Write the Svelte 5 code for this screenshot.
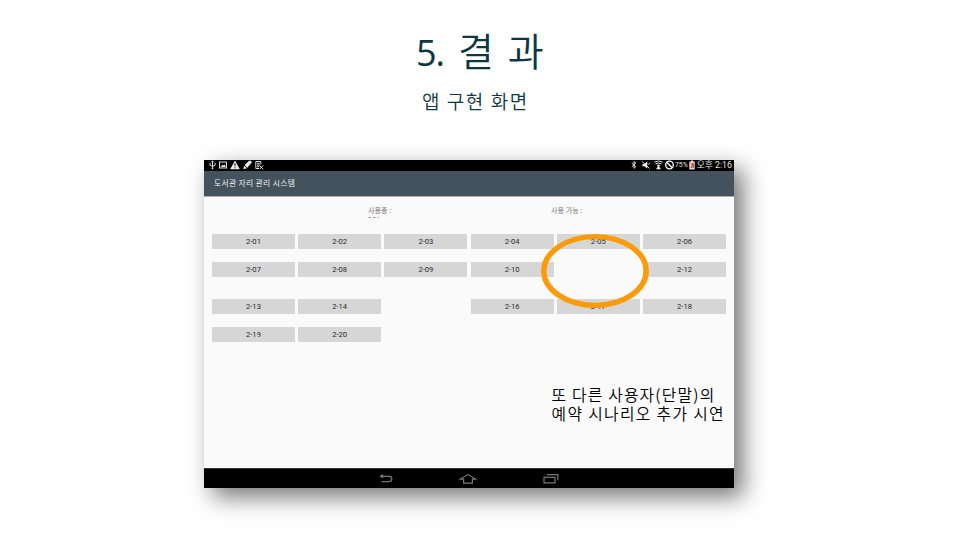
<script>
  const rows = [
    ['2-01', '2-02', '2-03', '2-04', '2-05', '2-06'],
    ['2-07', '2-08', '2-09', '2-10', '', '2-12'],
    ['2-13', '2-14', '', '2-16', '2-17', '2-18'],
    ['2-19', '2-20', '', '', '', '']
  ];
</script>

<main class="slide">
  <h1><span class="num">5.</span><span>결 과</span></h1>
  <h2>앱 구현 화면</h2>

  <section class="tablet">
    <div class="status">
      <div class="icons left">
        <svg width="7" height="10" viewBox="0 0 7 10"><path d="M3.5 1v7.5M1 3v2.2l2.5 1.4L6 5.2V3M2.5 2.2l1-1.4 1 1.4" /><circle cx="3.5" cy="8.5" r=".8" class="solid" /></svg>
        <svg width="8" height="10" viewBox="0 0 8 10"><rect x=".5" y="2" width="7" height="6" /><path class="solid" d="M1.5 7l2-2.2 1 1L5.5 4.5 6.8 7z" /></svg>
        <svg width="10" height="10" viewBox="0 0 10 10"><path class="solid" d="M5 .5L9.8 9.3H.2z" /><path class="dark" d="M5 3.3v3M5 7.2v1.1" /></svg>
        <svg width="9" height="10" viewBox="0 0 9 10"><path class="solid" d="M.3 9.3l.8-3.6 2.8 2.6zM1.6 5L5.8.9q1.5-.8 2.5.3.8 1.1-.1 2.1L4.3 7.8z" /></svg>
        <svg class="doc" width="9" height="10" viewBox="0 0 9 10"><path d="M4 8.5H.8v-7h5v3M2 3.3h2.7M2 5h2.5M2 6.7h2M4.2 5.2l4 4M8.2 5.5L4.5 9.2" /></svg>
      </div>
      <div class="icons right">
        <svg class="bt" width="6" height="10" viewBox="0 0 6 10"><path d="M.8 3l4 3.7L3 8.3V1.5l1.8 1.6L.8 6.8" /></svg>
        <svg class="mute" width="8" height="10" viewBox="0 0 8 10"><path class="solid" d="M.5 4h1.8l3-2.5v7L2.3 6.3H.5z" /><path d="M.2 1.5l7.3 7M6.2 4.5L8 2.8" /></svg>
        <svg class="wifi" width="9" height="10" viewBox="0 0 9 10"><path d="M.3 2q4.2-2 8.4 0M1.5 3.8q3-1.4 6 0M2.8 5.4q1.7-.8 3.4 0" /><path class="solid" d="M4.5 4.6l1.3 2.9 1.2 1.8H2l1.2-1.8z" /></svg>
        <svg width="9" height="10" viewBox="0 0 9 10"><circle class="ban" cx="4.5" cy="5" r="3.8" /><path class="ban" d="M1.8 2.3l5.4 5.4" /></svg>
        <span class="percent">75%</span>
        <svg class="battery" width="6" height="10" viewBox="0 0 6 10"><path fill="#e7d9d2" stroke="none" d="M2 .6h2v1h1.7v7.8H.3V1.6H2z" /><path stroke="#b42c20" d="M1.8 3.8h2.4v4.4M4 4L2 8" /></svg>
        <span class="clock">오후 2:16</span>
      </div>
    </div>

    <header>도서관 자리 관리 시스템</header>

    <div class="screen">
      <div class="counts">
        <div class="used">사용중 :<span class="clip"><i>2-16</i></span></div>
        <div class="free">사용 가능 :</div>
      </div>
      <div class="seats">
        {#each rows as row, r}
          <div class="row" class:spaced={r === 2}>
            {#each row as seat}
              <div class="seat" class:empty={!seat}>{seat}</div>
            {/each}
          </div>
        {/each}
      </div>
      <div class="note">
        <p class="first">또 다른 사용자(단말)의</p>
        <p>예약 시나리오 추가 시연</p>
      </div>
    </div>

    <nav>
      <svg width="14" height="12" viewBox="0 0 14 12"><path d="M1 3.3h8.8q3 0 3 2.7t-3 2.7H2.5" /><path d="M4.2 1L.5 3.3l3.7 2.3z" class="arrow" /></svg>
      <svg width="18" height="12" viewBox="0 0 18 12"><path d="M1.4 6.1L9 1.6l7.6 4.5h-3.2v4H4.6v-4z" /></svg>
      <svg width="16" height="12" viewBox="0 0 16 12"><path d="M1 4.3h11v5.5H1zM4 1.6h10.8v5.6" /></svg>
    </nav>

    <svg class="highlight" width="110" height="78" viewBox="0 0 110 78"><ellipse cx="55" cy="39" rx="51.2" ry="34.4" /></svg>
  </section>
</main>

<style>
  .slide {
    width: 960px;
    height: 540px;
    overflow: hidden;
    background: #fff;
    display: flex;
    flex-direction: column;
    font-family: "Noto Sans CJK KR", sans-serif;
  }
  h1, h2, p { margin: 0; }
  h1, h2 { font-weight: 350; color: #0f3740; white-space: pre; }
  h1 {
    display: flex;
    padding: 19px 0 0 416px;
    height: 63px;
    line-height: 60px;
    font-size: 39px;
    letter-spacing: 1.8px;
    word-spacing: 1.5px;
  }
  .num {
    width: 42px;
    font-family: "Open Sans", sans-serif;
    font-size: 36px;
    font-weight: 380;
    letter-spacing: -1px;
    line-height: 67px;
  }
  h2 {
    padding-left: 422px;
    height: 38px;
    line-height: 38px;
    font-size: 19px;
    letter-spacing: 1.55px;
  }
  .tablet {
    position: relative;
    margin: 40px 0 0 204px;
    width: 530px;
    height: 328px;
    display: flex;
    flex-direction: column;
    background: #fafafa;
    box-shadow: 9px 9px 22px rgba(0, 0, 0, 0.54);
  }
  svg { display: block; fill: none; stroke: #ddd; stroke-width: 1; flex: none; }
  .solid { fill: #eee; stroke: none; }
  .dark { stroke: #000; }
  .ban { stroke-width: 1.3; stroke: #fff; }
  .status {
    height: 10.5px;
    flex: none;
    background: #000;
    color: #e4e4e4;
    display: flex;
    justify-content: space-between;
  }
  .icons { display: flex; align-items: center; }
  .left { padding-left: 5px; gap: 3px; }
  .right { padding-right: 2px; }
  .bt { margin-right: 5px; }
  .mute { margin-right: 4px; }
  .wifi { margin-right: 2px; }
  .percent { font: 6.8px Roboto, sans-serif; margin: 0 1px; }
  .battery { margin-right: 2px; }
  .clock { font: 8.8px/10px Roboto, "Noto Sans CJK KR", sans-serif; white-space: nowrap; }
  header {
    height: 26px;
    flex: none;
    padding-left: 10px;
    background: #43525d;
    border-bottom: 1px solid #a9aeb2;
    box-sizing: border-box;
    color: #eee;
    font-size: 7.8px;
    font-weight: 400;
    line-height: 23px;
    letter-spacing: 0.32px;
  }
  .screen { flex: 1; min-height: 0; padding: 8.5px 8px 0; }
  .counts { display: flex; height: 29px; color: #777; font-size: 7.1px; line-height: 11px; }
  .used { width: 183px; padding-left: 156px; box-sizing: content-box; flex: none; }
  .clip { display: block; height: 2px; overflow: hidden; }
  .clip i { display: block; font: 6px/5px Roboto, sans-serif; color: #444; }
  .seats { display: flex; flex-direction: column; gap: 12.5px; }
  .row { display: grid; grid-template-columns: repeat(6, 1fr); gap: 3.3px; height: 15px; }
  .spaced { margin-top: 10px; }
  .seat {
    background: #d6d6d6;
    color: #2c2c2c;
    text-align: center;
    font: 400 7.6px/15px Roboto, sans-serif;
  }
  .empty { background: none; }
  .note {
    padding: 43.5px 0 0 339.5px;
    color: #000;
    font-size: 15.8px;
    font-weight: 350;
    letter-spacing: 1.35px;
    white-space: nowrap;
  }
  .note p { height: 19px; line-height: 19px; }
  .note .first { letter-spacing: 1.2px; }
  nav {
    height: 20px;
    flex: none;
    box-sizing: border-box;
    border-top: 1px solid #333;
    background: #000;
    display: flex;
    align-items: center;
    padding-left: 175px;
    gap: 66px;
  }
  nav svg { stroke: #777; stroke-width: 1.2; }
  .arrow { fill: #777; stroke: none; }
  .highlight { position: absolute; left: 336px; top: 72px; }
  .highlight ellipse { stroke: #fb9b0a; stroke-width: 5.4; }
</style>
